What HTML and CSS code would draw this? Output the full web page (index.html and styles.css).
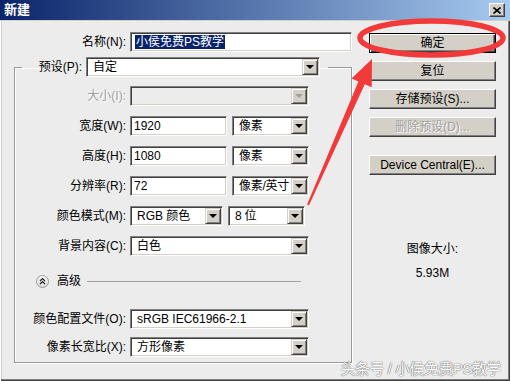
FILE: index.html
```html
<!DOCTYPE html>
<html lang="zh-CN">
<head>
  <meta charset="UTF-8">
  <title>新建</title>
  <link rel="stylesheet" href="styles.css">
</head>
<body>
  <div class="window">
    <div class="titlebar">
      <span class="title">新建</span>
      <span class="close">
        <svg width="8" height="7" viewBox="0 0 8 7"><path d="M0.5 0.5l7 6M7.5 0.5l-7 6" stroke="#000" stroke-width="1.6"/></svg>
      </span>
    </div>

    <div class="content">
      <div class="main">
        <div class="name-row">
          <label class="lbl">名称(N):</label>
          <div class="field name-field"><span class="picked">小侯免费PS教学</span></div>
        </div>

        <fieldset class="group">
          <legend class="preset">
            <label class="lbl preset-lbl">预设(P):</label>
            <div class="select preset-select"><span>自定</span><i class="drop"></i></div>
          </legend>

          <div class="grid">
            <label class="lbl off">大小(I):</label>
            <div class="select wide off-select"><span></span><i class="drop"></i></div>

            <label class="lbl">宽度(W):</label>
            <div class="pair">
              <div class="field num">1920</div>
              <div class="select unit"><span>像素</span><i class="drop"></i></div>
            </div>

            <label class="lbl">高度(H):</label>
            <div class="pair">
              <div class="field num">1080</div>
              <div class="select unit"><span>像素</span><i class="drop"></i></div>
            </div>

            <label class="lbl">分辨率(R):</label>
            <div class="pair">
              <div class="field num">72</div>
              <div class="select unit"><span>像素/英寸</span><i class="drop"></i></div>
            </div>

            <label class="lbl">颜色模式(M):</label>
            <div class="pair">
              <div class="select mode"><span>RGB 颜色</span><i class="drop"></i></div>
              <div class="select unit"><span>8 位</span><i class="drop"></i></div>
            </div>

            <label class="lbl">背景内容(C):</label>
            <div class="select wide"><span>白色</span><i class="drop"></i></div>
          </div>

          <div class="advanced">
            <svg class="toggle" width="13" height="13" viewBox="0 0 13 13">
              <defs>
                <linearGradient id="knob" x1="0" y1="0" x2="0" y2="1">
                  <stop offset="0" stop-color="#ffffff"/>
                  <stop offset="1" stop-color="#d8d8d8"/>
                </linearGradient>
              </defs>
              <circle cx="6.5" cy="6.5" r="6" fill="url(#knob)" stroke="#9a9a9a"/>
              <path d="M4 6l2.5-2.5L9 6M4 9l2.5-2.5L9 9" fill="none" stroke="#222" stroke-width="1.2"/>
            </svg>
            <span>高级</span>
            <span class="rule"></span>
          </div>

          <div class="grid profile">
            <label class="lbl">颜色配置文件(O):</label>
            <div class="select wide"><span>sRGB IEC61966-2.1</span><i class="drop"></i></div>

            <label class="lbl">像素长宽比(X):</label>
            <div class="select wide"><span>方形像素</span><i class="drop"></i></div>
          </div>
        </fieldset>
      </div>

      <div class="side">
        <button class="btn default">确定</button>
        <button class="btn">复位</button>
        <button class="btn">存储预设(S)...</button>
        <button class="btn disabled">删除预设(D)...</button>
        <button class="btn central">Device Central(E)...</button>
        <div class="info">
          <div>图像大小:</div>
          <div class="size">5.93M</div>
        </div>
      </div>
    </div>

    <svg class="marks" width="510" height="381" viewBox="0 0 510 381">
      <ellipse cx="431.5" cy="38" rx="71.5" ry="17" fill="none" stroke="#f23a3a" stroke-width="5.5"/>
      <polygon points="372,59 371.7,87.2 364.8,84.2 308.9,205.4 307.1,204.6 358.4,81.4 351.5,78.4" fill="#f23a3a"/>
    </svg>

    <div class="watermark">头条号 / 小侯免费PS教学</div>
  </div>
</body>
</html>
```

FILE: styles.css
```css
body {
  margin: 0;
  font-family: "Liberation Sans", "Noto Sans CJK SC", sans-serif;
  font-size: 12px;
  color: #000;
}

.window {
  position: relative;
  width: 510px;
  height: 381px;
  box-sizing: border-box;
  background: #ececec;
  box-shadow: inset 1px 0 #ffffff, inset -1px -1px #404040, inset -2px -2px #808080, inset 2px 0 #d4d0c8;
  overflow: hidden;
}

.titlebar {
  height: 20px;
  display: flex;
  align-items: center;
  justify-content: space-between;
  padding: 0 5px 0 4px;
  background: linear-gradient(to right, #0a246a, #a6caf0);
  border-bottom: 1px solid #d4d0c8;
}

.title {
  color: #fff;
  font-weight: bold;
  font-size: 13px;
  line-height: 16px;
}

.close {
  width: 16px;
  height: 14px;
  box-sizing: border-box;
  display: flex;
  align-items: center;
  justify-content: center;
  background: #d4d0c8;
  border: 1px solid;
  border-color: #fff #404040 #404040 #fff;
  box-shadow: inset -1px -1px #808080;
}

.content {
  display: flex;
  padding-top: 11px;
}

.main {
  width: 352px;
}

.lbl {
  text-align: right;
  line-height: 20px;
  white-space: nowrap;
}

.lbl.off {
  color: #a0a0a0;
  text-shadow: 1px 1px #fff;
}

.name-row {
  display: grid;
  grid-template-columns: 126px 222px;
  column-gap: 4px;
  height: 20px;
}

.field,
.select {
  height: 20px;
  box-sizing: border-box;
  background: #fff;
  border: 1px solid;
  border-color: #808080 #fff #fff #808080;
  box-shadow: inset 1px 1px #404040, inset -1px -1px #d4d0c8;
  line-height: 16px;
  white-space: nowrap;
}

.field {
  padding: 1px 3px;
}

.picked {
  display: inline-block;
  margin-left: 1px;
  margin-top: 0;
  padding: 0 1px;
  background: #0a246a;
  color: #fff;
  line-height: 14px;
}

.select {
  display: flex;
  justify-content: space-between;
  padding: 1px 1px 1px 6px;
}

.drop {
  width: 16px;
  height: 16px;
  box-sizing: border-box;
  background: #d4d0c8;
  border: 1px solid;
  border-color: #d4d0c8 #404040 #404040 #d4d0c8;
  box-shadow: inset 1px 1px #fff, inset -1px -1px #808080;
  display: flex;
  align-items: center;
  justify-content: center;
}

.drop::after {
  content: "";
  border-left: 4px solid transparent;
  border-right: 4px solid transparent;
  border-top: 4px solid #000;
}

.off-select {
  background: #ececec;
}

.off-select .drop::after {
  border-top-color: #a0a0a0;
}

.group {
  margin: 5px 0 0 14px;
  width: 338px;
  box-sizing: border-box;
  padding: 0 0 5px 0;
  border: 1px solid #9a9a9a;
  box-shadow: 1px 1px #fff, inset 1px 1px #fff;
  min-inline-size: 0;
}

.preset {
  display: flex;
  gap: 4px;
  margin-left: 7px;
  padding: 0 8px 0 0;
}

.preset-lbl {
  width: 60px;
}

.preset-select {
  width: 234px;
}

.grid {
  display: grid;
  grid-template-columns: 111px 179px;
  grid-auto-rows: 20px;
  gap: 10px 4px;
  margin-top: 9px;
}

.pair {
  display: flex;
  gap: 5px;
}

.num {
  width: 97px;
}

.unit {
  width: 77px;
}

.mode {
  width: 93px;
}

.unit span {
  letter-spacing: -0.3px;
}

.advanced {
  display: flex;
  align-items: center;
  height: 13px;
  margin-top: 19px;
  padding-left: 21px;
  line-height: 13px;
}

.toggle {
  margin-right: 8px;
}

.rule {
  width: 214px;
  height: 1px;
  margin-left: 6px;
  background: #a0a0a0;
}

.profile {
  margin-top: 21px;
  row-gap: 8px;
}

.side {
  width: 127px;
  margin-left: 17px;
  padding-top: 1px;
}

.btn {
  display: block;
  width: 127px;
  height: 20px;
  margin-bottom: 8px;
  padding: 0;
  box-sizing: border-box;
  background: #d4d0c8;
  border: 1px solid;
  border-color: #fff #404040 #404040 #fff;
  box-shadow: inset -1px -1px #808080;
  font: inherit;
  line-height: 16px;
  color: #000;
}

.btn.default {
  border-color: #000;
  box-shadow: inset 1px 1px #fff, inset -1px -1px #404040, inset -2px -2px #808080;
}

.btn.disabled {
  color: #a0a0a0;
  text-shadow: 1px 1px #fff;
}

.btn.central {
  margin-top: 18px;
}

.info {
  margin-top: 66px;
  text-align: center;
  line-height: 16px;
}

.size {
  margin-top: 8px;
}

.marks {
  position: absolute;
  top: 0;
  left: 0;
  pointer-events: none;
}

.watermark {
  position: absolute;
  right: 9px;
  bottom: 3px;
  font-size: 15px;
  line-height: 18px;
  color: #fff;
  letter-spacing: -0.5px;
  text-shadow: 0 0 1px #555, 0 0 1px #555;
}
```
